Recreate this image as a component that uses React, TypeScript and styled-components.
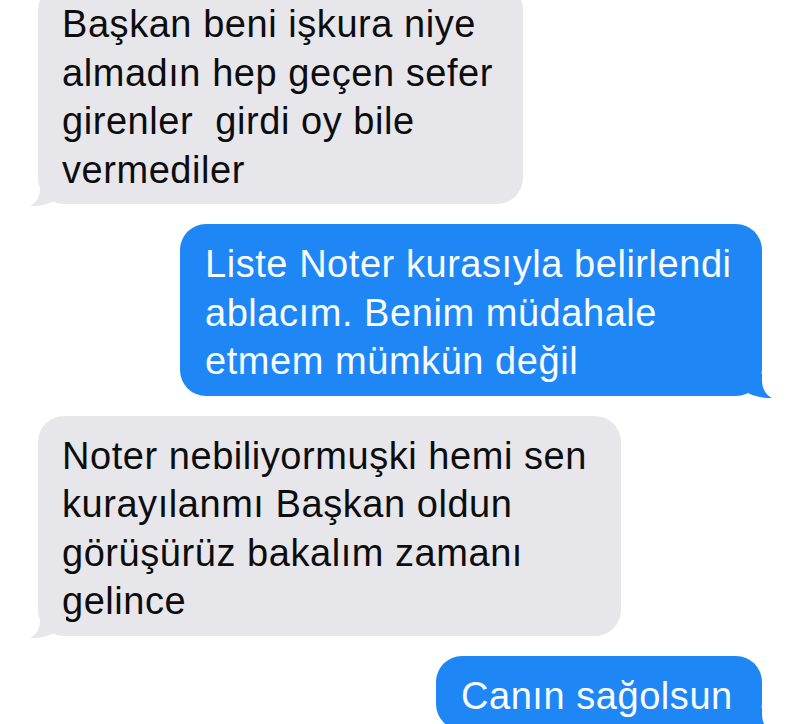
import React from "react";
import styled, { createGlobalStyle } from "styled-components";

const GlobalStyle = createGlobalStyle`
  html, body {
    margin: 0;
    padding: 0;
    background: #ffffff;
  }
  body {
    font-family: "Liberation Sans", Arial, Helvetica, sans-serif;
    overflow: hidden;
  }
`;

const GREY = "#e6e6eb";
const BLUE = "#1f87f5";

const Screen = styled.div`
  width: 800px;
  height: 724px;
  overflow: hidden;
  background: #ffffff;
`;

const Thread = styled.div`
  display: flex;
  flex-direction: column;
  gap: 20px;
  padding: 0 38px;
  margin-top: -16px;
`;

const Row = styled.div<{ $mine?: boolean }>`
  display: flex;
  justify-content: ${(p) => (p.$mine ? "flex-end" : "flex-start")};
`;

const Bubble = styled.div<{ $mine?: boolean; $w: number }>`
  position: relative;
  box-sizing: border-box;
  width: ${(p) => p.$w}px;
  padding: 16px 20px 10px ${(p) => (p.$mine ? 25 : 24)}px;
  border-radius: 26px;
  background: ${(p) => (p.$mine ? BLUE : GREY)};
  color: ${(p) => (p.$mine ? "#f8fbff" : "#0d0d0d")};
  font-size: 38px;
  line-height: 48.5px;
  letter-spacing: 0.55px;
`;

const Line = styled.span`
  display: block;
  white-space: pre;
`;

const TailSvg = styled.svg<{ $mine?: boolean }>`
  position: absolute;
  bottom: -2px;
  width: 36px;
  height: 24px;
  ${(p) =>
    p.$mine
      ? "right: -10px;"
      : "left: -8px; transform: scaleX(-1);"}
`;

const Tail: React.FC<{ mine?: boolean; color: string }> = ({ mine, color }) => (
  <TailSvg $mine={mine} viewBox="-6 0 36 24" aria-hidden="true">
    <path
      d="M -6 0 L 20 0 L 20 6 C 20 15 24 21 30 24 C 22 24.5 13 22.5 6 19 L -6 19 Z"
      fill={color}
    />
  </TailSvg>
);

type Msg = { mine?: boolean; w: number; lines: string[] };

const messages: Msg[] = [
  {
    w: 485,
    lines: [
      "Başkan beni işkura niye",
      "almadın hep geçen sefer",
      "girenler  girdi oy bile",
      "vermediler",
    ],
  },
  {
    mine: true,
    w: 582,
    lines: [
      "Liste Noter kurasıyla belirlendi",
      "ablacım. Benim müdahale",
      "etmem mümkün değil",
    ],
  },
  {
    w: 583,
    lines: [
      "Noter nebiliyormuşki hemi sen",
      "kurayılanmı Başkan oldun",
      "görüşürüz bakalım zamanı",
      "gelince",
    ],
  },
  {
    mine: true,
    w: 326,
    lines: ["Canın sağolsun"],
  },
];

export default function App() {
  return (
    <Screen>
      <GlobalStyle />
      <Thread>
        {messages.map((m, i) => (
          <Row key={i} $mine={m.mine}>
            <Bubble $mine={m.mine} $w={m.w}>
              {m.lines.map((l, j) => (
                <Line key={j}>{l}</Line>
              ))}
              <Tail mine={m.mine} color={m.mine ? BLUE : GREY} />
            </Bubble>
          </Row>
        ))}
      </Thread>
    </Screen>
  );
}
